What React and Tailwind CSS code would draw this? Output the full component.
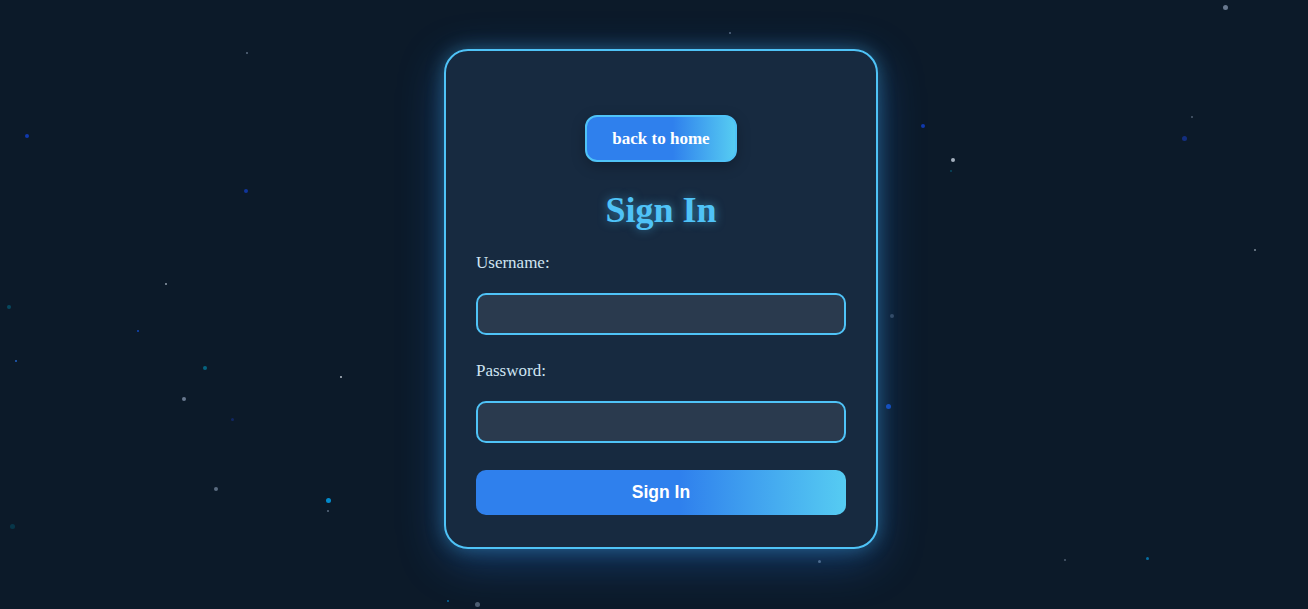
import { useState } from "react";

const stars = [
  { x: 247, y: 53, s: 2, c: "bg-slate-400/60" },
  { x: 27, y: 136, s: 4, c: "bg-blue-700/70" },
  { x: 246, y: 191, s: 4, c: "bg-blue-700/60" },
  { x: 166, y: 284, s: 2, c: "bg-slate-300/70" },
  { x: 730, y: 33, s: 2, c: "bg-slate-400/60" },
  { x: 1225, y: 7, s: 5, c: "bg-slate-400/70" },
  { x: 923, y: 126, s: 4, c: "bg-blue-700/70" },
  { x: 953, y: 160, s: 4, c: "bg-slate-300/80" },
  { x: 951, y: 171, s: 1.5, c: "bg-cyan-700/50" },
  { x: 1192, y: 117, s: 2, c: "bg-slate-400/50" },
  { x: 1184, y: 138, s: 5, c: "bg-blue-800/60" },
  { x: 1255, y: 250, s: 1.5, c: "bg-slate-300/60" },
  { x: 9, y: 307, s: 4, c: "bg-cyan-700/50" },
  { x: 138, y: 331, s: 2, c: "bg-blue-600/70" },
  { x: 16, y: 361, s: 2, c: "bg-blue-500/70" },
  { x: 205, y: 368, s: 3.5, c: "bg-cyan-600/60" },
  { x: 341, y: 377, s: 1.5, c: "bg-slate-200/80" },
  { x: 184, y: 399, s: 3.5, c: "bg-slate-400/70" },
  { x: 232, y: 419, s: 3, c: "bg-blue-800/40" },
  { x: 216, y: 489, s: 4.5, c: "bg-slate-400/60" },
  { x: 328, y: 500, s: 5, c: "bg-sky-500/80" },
  { x: 328, y: 511, s: 2, c: "bg-slate-400/60" },
  { x: 12, y: 526, s: 5, c: "bg-cyan-800/40" },
  { x: 892, y: 316, s: 3.5, c: "bg-slate-500/50" },
  { x: 888, y: 406, s: 5, c: "bg-blue-600/70" },
  { x: 1065, y: 560, s: 2, c: "bg-slate-400/50" },
  { x: 1147, y: 558, s: 3, c: "bg-sky-500/60" },
  { x: 819, y: 561, s: 3, c: "bg-slate-400/60" },
  { x: 448, y: 601, s: 2.5, c: "bg-sky-500/60" },
  { x: 477, y: 604, s: 5, c: "bg-slate-400/50" },
];

const Field = ({ label, type, value, onChange, gap }) => (
  <div className={gap}>
    <label className="block h-5 text-[17px] leading-5 text-[#cfe4f2]">{label}</label>
    <input
      type={type}
      value={value}
      onChange={(e) => onChange(e.target.value)}
      className="mt-[20px] block h-[42px] w-full rounded-[10px] border-2 border-[#4fc3f7] bg-[#2a3a4e] px-3 text-[16px] text-white outline-none"
    />
  </div>
);

const App = () => {
  const [username, setUsername] = useState("");
  const [password, setPassword] = useState("");

  return (
    <div className="relative min-h-[609px] w-full overflow-hidden bg-[#0c1a29] font-['Liberation_Serif',serif]">
      {/* background stars */}
      {stars.map((star, i) => (
        <span
          key={i}
          className={`absolute rounded-full ${star.c}`}
          style={{ left: star.x - star.s / 2, top: star.y - star.s / 2, width: star.s, height: star.s }}
        />
      ))}

      <div className="relative flex justify-center pl-[14px] pt-[49px]">
        <div className="w-[434px] rounded-[24px] border-2 border-[#4fc3f7] bg-[#172a40] px-[30px] pb-[32px] pt-[64px] shadow-[0_0_18px_rgba(79,195,247,0.35),0_12px_45px_rgba(30,100,190,0.45)]">
          <div className="flex justify-center">
            <button className="h-[47px] w-[152px] rounded-[12px] border-2 border-[#4fc3f7] bg-[linear-gradient(90deg,#2f80ed_0%,#2f80ed_58%,#56ccf2_100%)] text-[17px] font-bold text-white shadow-[0_4px_14px_rgba(0,0,0,0.25)]">
              back to home
            </button>
          </div>

          <h1 className="mt-[27px] text-center text-[36px] font-bold leading-[42px] text-[#4fc3f7] [text-shadow:0_0_10px_rgba(79,195,247,0.55)]">
            Sign In
          </h1>

          <Field label="Username:" type="text" value={username} onChange={setUsername} gap="mt-[22px]" />
          <Field label="Password:" type="password" value={password} onChange={setPassword} gap="mt-[26px]" />

          <button className="mt-[27px] h-[45px] w-full rounded-[10px] bg-[linear-gradient(90deg,#2f80ed_0%,#2f80ed_55%,#56ccf2_100%)] font-['Liberation_Sans',sans-serif] text-[17.5px] font-bold text-white">
            Sign In
          </button>
        </div>
      </div>
    </div>
  );
};

export default App;
